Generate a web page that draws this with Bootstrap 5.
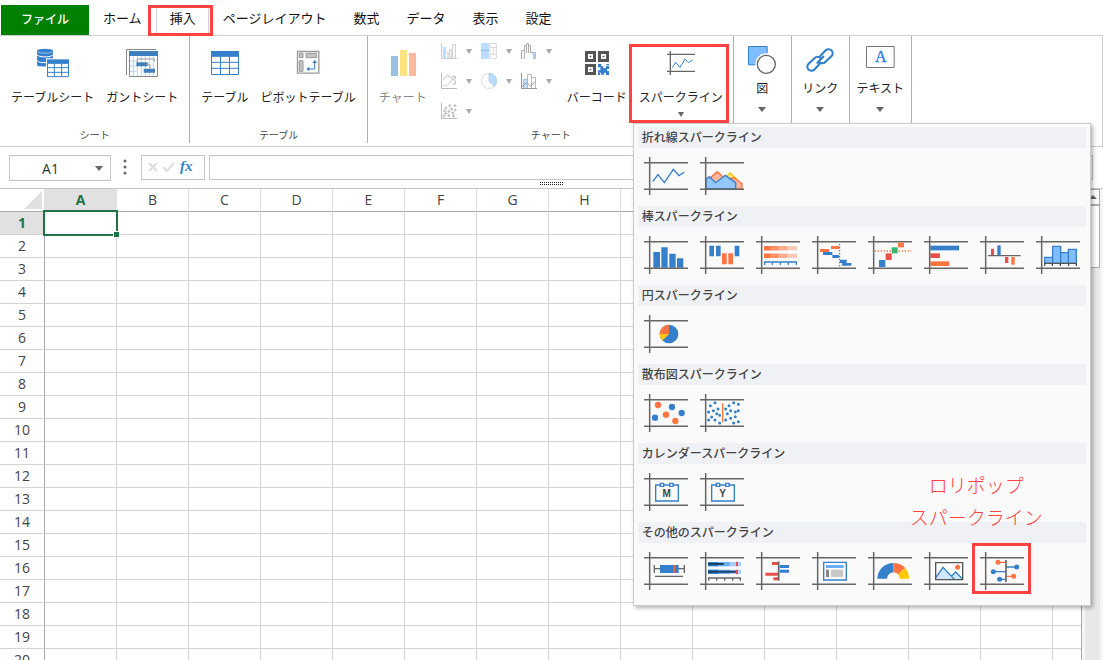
<!DOCTYPE html>
<html lang="ja">
<head>
<meta charset="utf-8">
<meta name="viewport" content="width=device-width, initial-scale=1">
<title>スプレッドシート デザイナー</title>
<link href="https://cdn.jsdelivr.net/npm/bootstrap@5.3.0/dist/css/bootstrap.min.css" rel="stylesheet">
<style>
  :root { --ui: "Noto Sans CJK JP", sans-serif; --line: #d0d0d0; --hot: #ff4343; --blue: #3580cc; }
  body { font-family: var(--ui); font-size: 12px; color: #222; background: #fff; }
  button { font-family: inherit; }
  svg { display: block; }

  /* tab strip */
  .tabstrip { padding: 5px 0 0 1px; gap: 1px; font-size: 13px; }
  .tabstrip button { height: 30px; padding: 0 12px 5px; border: 1px solid transparent; border-bottom: 0; background: none; color: #111; line-height: 24px; white-space: nowrap; }
  .tabstrip .file-tab { width: 88px; padding-bottom: 3px; background: #008000; color: #fff; font-size: 12px; font-weight: 500; }
  .tabstrip .on { border-color: var(--line); position: relative; padding-left: 13px; }
  .marked::after { content: ""; position: absolute; border: 3px solid var(--hot); pointer-events: none; z-index: 1100; }
  .on.marked::after { inset: -1px -5px -1px -9px; }

  /* ribbon */
  .ribbon { height: 112px; border: 1px solid var(--line); border-left: 0; }
  .rgroup { border-right: 1px solid #adb2ba; height: 107px; padding: 0 5px; }
  .rgroup.chartgroup { padding-right: 4px; }
  .rgroup.slim { padding: 0; }
  .rgroup-name { font-size: 10px; line-height: 14px; padding-bottom: 1px; color: #444; }
  .rbtn { border: 0; background: none; padding: 11px 6px 0; color: #222; font-size: 12px; line-height: 20px; white-space: nowrap; }
  .rbtn .cap { display: block; margin-top: 8px; }
  .slim .rbtn { padding-top: 8px; min-width: 57px; }
  .slim .rbtn.wide { min-width: 61px; }
  .slim .rbtn .cap { margin-top: 2px; }
  .rbtn.off { color: #888; }
  .tri { display: block; width: 0; border: 4px solid transparent; border-top: 5px solid #666; border-bottom: 0; }
  .tri.sm { border-width: 5px 3px 0; border-top-color: #666; margin-top: 5px; }
  .slim .tri { margin-top: 9px; border-width: 5px 4px 0; }
  .chartrow { height: 90px; }
  .minis { display: grid; grid-template-columns: repeat(3, 40px); grid-auto-rows: 30px; margin: 0 4px; }
  .minis button { border: 0; background: none; padding: 0 0 0 4px; display: flex; align-items: center; gap: 9px; }
  .minis .tri { border-width: 5px 3px 0; border-top-color: #aaa; }
  .spark.marked::after { inset: 8px 0 3px -4px; }

  /* sparkline gallery */
  .gallery { display: block; top: 87px; left: 0; width: 458px; padding: 3px 4px 4px; border: 1px solid #ccc; border-radius: 0; background: #fafafa; box-shadow: 2px 2px 4px rgba(0,0,0,.3); z-index: 1050; }
  .gallery h6 { margin: 0; padding-left: 4px; font-size: 12px; line-height: 19px; height: 21px; font-weight: 500; color: #444; background: #f0f1f5; }
  .cells { height: 58px; }
  .cells button { width: 56px; height: 56px; border: 0; background: none; padding: 0 6px; position: relative; }
  .cells .marked::after { inset: 0 -1px 5px -2px; }
  .callout { top: 345px; right: 47px; font-size: 19px; line-height: 32px; font-weight: 300; color: var(--hot); pointer-events: none; }

  /* formula bar */
  .fbar { padding: 8px 10px 0 9px; }
  .box { border: 1px solid #c6c6c6; background: #fff; }
  .namebox { width: 102px; height: 26px; }
  .namebox input { width: 81px; border: 0; padding: 0; text-align: center; font: 14px "Open Sans", sans-serif; color: #333; }
  .fxbox { width: 64px; height: 25px; margin-left: 14px; }
  .fxbox button { border: 0; background: none; padding: 0; }
  .fbar .formula { height: 25px; margin-left: 4px; padding: 0 4px; min-width: 0; font-size: 13px; }
  .dots { width: 4px; margin-left: 12px; }
  .grip { height: 8px; border-bottom: 1px solid #c6c6c6; padding-top: 1px; }
  .grip i { width: 24px; height: 4px; background: repeating-linear-gradient(90deg, #222 0 1px, transparent 1px 2px) 0 0/100% 1px repeat-x, repeating-linear-gradient(90deg, #222 0 1px, transparent 1px 2px) 0 2px/100% 1px repeat-x; }

  /* sheet */
  .sheet { border-right: 1px solid #aaa; min-width: 0; }
  .cellgrid { table-layout: fixed; width: 1125px; border-collapse: separate; border-spacing: 0; font: 14px/20px "Open Sans", "Noto Sans", sans-serif; color: #444; }
  .cellgrid th, .cellgrid td { height: 23px; padding: 0; border: 0 solid #d4d4d4; border-width: 0 1px 1px 0; text-align: center; font-weight: 400; }
  .cellgrid thead th { border-bottom-color: #aaa; border-right-color: #dde2dd; }
  .cellgrid tbody th { border-right-color: #aaa; }
  .cellgrid th.cur { background: #e1e1e1; color: #217346; font-weight: 700; }
  .cellgrid td.cur { position: relative; }
  .cellgrid td.cur::before { content: ""; position: absolute; inset: -2px -2px; border: 2px solid #217346; }
  .cellgrid td.cur::after { content: ""; position: absolute; right: -3px; bottom: -3px; width: 6px; height: 6px; background: #217346; border: solid #fff; border-width: 1px 0 0 1px; }
  .corner { display: block; width: 0; margin: 0 2px 0 auto; border: solid transparent; border-width: 0 0 18px 18px; border-bottom-color: #e1e1e1; }
  .sbar { width: 21px; padding-left: 3px; background: #f5f5f5; }
  .track { width: 15px; background: #e8e8e8; }
  .track button { border: 1px solid #aaa; background: #fff; padding: 0; height: 16px; width: 15px; display: block; }
  .track .thumb { height: 63px; margin-top: 0; }
  .up { display: block; width: 0; margin: auto; border: 4px solid transparent; border-top: 0; border-bottom-color: #666; }
</style>
</head>
<body class="d-flex flex-column vh-100 overflow-hidden">

<svg width="0" height="0" class="position-absolute" aria-hidden="true">
  <symbol id="axes" viewBox="0 0 132 114"><path d="M0 17H132M0 97H132M17 0V114" stroke="#666" stroke-width="4.500" fill="none"/></symbol>
</svg>

<nav class="tabstrip d-flex flex-shrink-0" aria-label="リボン">
  <button type="button" class="file-tab">ファイル</button>
  <button type="button">ホーム</button>
  <button type="button" class="on marked">挿入</button>
  <button type="button">ページレイアウト</button>
  <button type="button">数式</button>
  <button type="button">データ</button>
  <button type="button">表示</button>
  <button type="button">設定</button>
</nav>

<div class="ribbon d-flex flex-shrink-0">
  <section class="rgroup d-flex flex-column justify-content-between">
    <div class="d-flex">
      <button type="button" class="rbtn d-flex flex-column align-items-center">
        <svg width="32" height="32" viewBox="0 0 96 96"><path d="M0 12v39c0 4 10 7 24 7V12z" fill="#3580cc"/><path d="M24 12h24v23H28v23H0z" fill="#3580cc"/><path d="M0 23c4 9 44 9 48 0M0 40c4 7 15 7 27 7" stroke="#fff" stroke-width="3" fill="none"/><ellipse cx="24" cy="12" rx="24" ry="7" fill="#3580cc"/><path d="M2 14c6 6 38 6 44 0" stroke="#cfe2f5" stroke-width="2" fill="none"/><path d="M27 34h69v58H27z" fill="#fff"/><path d="M30 37h66v12H30z" fill="#3580cc"/><path d="M31.500 49h63v40h-63zM31 62h64M31 76h64M52 49v40M74 49v40" stroke="#3580cc" stroke-width="3" fill="none"/></svg>
        <span class="cap">テーブルシート</span></button>
      <button type="button" class="rbtn d-flex flex-column align-items-center">
        <svg width="32" height="32" viewBox="0 0 96 96"><path d="M1.500 84V7.500H90" stroke="#888" stroke-width="3" fill="none"/><path d="M10.500 13.500h84v75h-84z" fill="#fff" stroke="#888" stroke-width="3"/><path d="M9 12h87v15H9z" fill="#3f7fbd"/><path d="M22 27v60M34 27v60M46 27v60M58 27v60M70 27v60M82 27v60M12 42h20M12 57h20M12 73h20" stroke="#bcd3ea" stroke-width="3"/><path d="M34 44V36h51v8" stroke="#999" stroke-width="3" fill="none"/><path d="M31 46h34v12H31zM53 65h34v12H53z" fill="#3f7fbd"/><path d="M60 52h12v12" stroke="#999" stroke-width="3" fill="none"/></svg>
        <span class="cap">ガントシート</span></button>
    </div>
    <div class="rgroup-name text-center">シート</div>
  </section>

  <section class="rgroup d-flex flex-column justify-content-between">
    <div class="d-flex">
      <button type="button" class="rbtn d-flex flex-column align-items-center">
        <svg width="32" height="32" viewBox="0 0 96 96"><path d="M6 12h84v16H6z" fill="#3580cc"/><path d="M7.500 28h81v54.500h-81zM7 46h82M7 64h82M34.500 28v54M61.500 28v54" stroke="#3580cc" stroke-width="3" fill="#fff"/></svg>
        <span class="cap">テーブル</span></button>
      <button type="button" class="rbtn d-flex flex-column align-items-center">
        <svg width="32" height="32" viewBox="0 0 96 96"><path d="M16.500 13.500h64v65h-64z" stroke="#999" stroke-width="4" fill="#fff"/><path d="M22 19h11v13H22zM42 19h32v13H42zM22 41h11v32H22z" fill="#c4c4c4" stroke="#999" stroke-width="3"/><path d="M68 43v23H48" stroke="#3f7fbd" stroke-width="3" fill="none"/><path d="M68 38l7 10H61zM43 66l9-7v14z" fill="#3f7fbd"/></svg>
        <span class="cap">ピボットテーブル</span></button>
    </div>
    <div class="rgroup-name text-center">テーブル</div>
  </section>

  <section class="rgroup chartgroup d-flex flex-column justify-content-between">
    <div class="chartrow d-flex">
      <button type="button" class="rbtn off d-flex flex-column align-items-center">
        <svg width="32" height="32" viewBox="0 0 96 96"><path d="M12 27h21v60H12z" fill="#9bbfe3"/><path d="M39 9h21v78H39z" fill="#ffe380"/><path d="M66 18h21v69H66z" fill="#fdb9a0"/></svg>
        <span class="cap">チャート</span></button>
      <div class="minis">
        <button type="button" aria-label="縦棒"><svg width="16" height="16" viewBox="0 0 48 48" fill="none" stroke="#ccc" stroke-width="3"><path d="M1.500 0V46.500H48"/><path d="M7 13h6v33H7z" fill="#b8dbff" stroke="#b8dbff"/><path d="M16 28h5v18M25 20h6v26h-6zM35 4h8v42h-8z"/></svg><i class="tri"></i></button>
        <button type="button" aria-label="ツリーマップ"><svg width="16" height="16" viewBox="0 0 48 48"><path d="M0 0h24v48H0z" fill="#bcddff"/><path d="M0 22h24" stroke="#8bb8e4" stroke-width="3"/><path d="M27 1.500h19v45H27zM27 13h19M27 34h19M37 13v21" stroke="#d8d8d8" stroke-width="3" fill="none"/></svg><i class="tri"></i></button>
        <button type="button" aria-label="ウォーターフォール"><svg width="16" height="16" viewBox="0 0 48 48" fill="none" stroke="#aaa" stroke-width="3"><path d="M1.500 48V22.500H10V48M10.500 22V7.500h6V30M16.500 8V1.500h6V30M22.500 7.500h6V30M28.500 28.500H37"/><path d="M37.500 28.500h6v18h-6z" fill="#bcddff" stroke="#9bbfe3"/></svg><i class="tri"></i></button>
        <button type="button" aria-label="折れ線"><svg width="16" height="16" viewBox="0 0 48 48" fill="none" stroke="#bbb" stroke-width="3"><path d="M1.500 0V46.500H48"/><path d="M6 20L20 7l24 18"/><path d="M6 38h12L42 10" stroke="#ccc"/><path d="M34 10h9v9M35 33h8v-9"/></svg><i class="tri"></i></button>
        <button type="button" aria-label="円"><svg width="16" height="16" viewBox="0 0 48 48"><circle cx="24" cy="24" r="22.500" fill="#fff" stroke="#ccc" stroke-width="2"/><path d="M24 24V1a23 23 0 0 1 16 39z" fill="#bcddff" stroke="#9bc5ef" stroke-width="2"/></svg><i class="tri"></i></button>
        <button type="button" aria-label="複合"><svg width="16" height="16" viewBox="0 0 48 48" fill="none" stroke="#999" stroke-width="3"><path d="M7.500 19.500h12v27h-12z" fill="#bcddff" stroke="#9bc5ef"/><path d="M19.500 4.500h12v42h-12zM31.500 13.500h12v33h-12z" stroke="#bbb"/><path d="M1.500 0V46.500H48M3 42l14-14 12 12 14-15"/></svg><i class="tri"></i></button>
        <button type="button" aria-label="散布図"><svg width="16" height="16" viewBox="0 0 48 48" fill="none" stroke="#bbb" stroke-width="3"><path d="M1.500 0V46.500H48"/><path stroke-width="3" stroke="#b4b4b4" d="M22 8h9M26.500 3.500v9M37 8h9M41.500 3.500v9M10 15h9M14.500 10.500v9M27 18h9M31.500 13.500v9M38 21h9M42.500 16.500v9M7 24h9M11.500 19.500v9M19 26h9M23.500 21.500v9M31 30h9M35.500 25.500v9M10 32h9M14.500 27.500v9M4 39h9M8.500 34.500v9M19 38h9M23.500 33.500v9M33 39h9M37.500 34.500v9"/></svg><i class="tri"></i></button>
      </div>
      <button type="button" class="rbtn d-flex flex-column align-items-center">
        <svg width="32" height="32" viewBox="0 0 96 96"><path fill="#555" fill-rule="evenodd" d="M12 12h33v33H12zM51 12h33v33H51zM12 51h33v33H12zM21 21v15h15V21zM60 21v15h15V21zM21 60v15h15V60z"/><path d="M26 26h5v5h-5zM65 26h5v5h-5zM26 65h5v5h-5z" fill="#555"/><path d="M51 51h10v7h6v6h8v-7h9v9h-6v6h6v12h-9v-7h-6v6h-9v-6h-9v-7h7v-9h-7zM76 51h8v4h-8zM51 78h6v6h-6z" fill="#3580cc"/></svg>
        <span class="cap">バーコード</span></button>
      <div class="spark marked position-relative dropdown">
        <button type="button" class="rbtn d-flex flex-column align-items-center" aria-expanded="true">
          <svg width="32" height="32" viewBox="0 0 96 96" fill="none"><path d="M6 22h84M6 73h84M16 12v72" stroke="#666" stroke-width="4"/><path d="M22 62L32 46 45 61 60 36 70 47 83 39" stroke="#3580cc" stroke-width="3"/></svg>
          <span class="cap">スパークライン</span><i class="tri sm"></i></button>

        <div class="gallery dropdown-menu show">
          <h6>折れ線スパークライン</h6>
          <div class="cells d-flex">
            <button type="button" aria-label="折れ線"><svg width="44" height="38" viewBox="0 0 132 114"><use href="#axes"/><path d="M26 74L42 53 61 77 88 37 105 56 121 45" fill="none" stroke="#3580cc" stroke-width="4"/></svg></button>
            <button type="button" aria-label="面"><svg width="44" height="38" viewBox="0 0 132 114"><path d="M76 95V62L90 48l20 18v29z" fill="#ffe680" stroke="#ffc800" stroke-width="4"/><path d="M18 95V74L52 44 76 66l27-3 23 17v15z" fill="#ffb59c" stroke="#ff7440" stroke-width="4"/><path d="M18 95V66l10-7 19 18 29-22 31 22v18z" fill="#94c7ff" stroke="#3580cc" stroke-width="4"/><use href="#axes"/></svg></button>
          </div>
          <h6>棒スパークライン</h6>
          <div class="cells d-flex">
            <button type="button" aria-label="縦棒"><svg width="44" height="38" viewBox="0 0 132 114"><path d="M28 48h20v47H28zM52 34h19v61H52zM76 53h19v42H76zM99 67h19v28H99z" fill="#3580cc"/><use href="#axes"/></svg></button>
            <button type="button" aria-label="勝敗"><svg width="44" height="38" viewBox="0 0 132 114"><use href="#axes"/><path d="M28 29h14v32H28zM48 29h14v32H48zM104 29h14v32h-14z" fill="#3580cc"/><path d="M66 52h14v33H66zM85 52h14v33H85z" fill="#ff7440"/></svg></button>
            <button type="button" aria-label="積み上げ"><svg width="44" height="38" viewBox="0 0 132 114"><use href="#axes"/><path d="M24 30h99v13H24zM24 53h99v13H24z" fill="#ffcbb8"/><path d="M24 30h70v13H24zM24 53h70v13H24z" fill="#ffac8c"/><path d="M24 30h43v13H24zM24 53h43v13H24z" fill="#ff8f66"/><path d="M24 30h19v13H24zM24 53h19v13H24z" fill="#ff7440"/><path d="M24 78h99M26 78v9M49 78v9M73 78v9M97 78v9M121 78v9" stroke="#3580cc" stroke-width="4"/></svg></button>
            <button type="button" aria-label="カスケード"><svg width="44" height="38" viewBox="0 0 132 114"><use href="#axes"/><path d="M57 30h24v9H57zM24 39h27v9H24z" fill="#ff7440"/><path d="M33 48h28v9H33zM61 57h20v9H61zM84 71h20v10H84zM90 81h28v8H90z" fill="#3580cc"/><path d="M83 24v70" stroke="#555" stroke-width="3" stroke-dasharray="4 5"/></svg></button>
            <button type="button" aria-label="パレート"><svg width="44" height="38" viewBox="0 0 132 114"><use href="#axes"/><path d="M20 45h110" stroke="#ff7440" stroke-width="5" stroke-dasharray="4 5"/><path d="M33 72h19v21H33z" fill="#3580cc"/><path d="M53 52h18v20H53z" fill="#e8504a"/><path d="M71 34h18v18H71z" fill="#3cb86c"/><path d="M90 20h18v14H90z" fill="#ff7440"/></svg></button>
            <button type="button" aria-label="横棒"><svg width="44" height="38" viewBox="0 0 132 114"><path d="M19 29h86v14H19z" fill="#3580cc"/><path d="M19 52h29v14H19z" fill="#e8504a"/><path d="M19 76h57v14H19z" fill="#ff7440"/><use href="#axes"/></svg></button>
            <button type="button" aria-label="バリ"><svg width="44" height="38" viewBox="0 0 132 114"><use href="#axes"/><path d="M33 38h9v20h-9zM75 63h10v18H75z" fill="#e8504a"/><path d="M52 28h10v30H52z" fill="#3580cc"/><path d="M94 63h10v23H94z" fill="#ff7440"/><path d="M24 59h98" stroke="#666" stroke-width="4"/></svg></button>
            <button type="button" aria-label="ヒストグラム"><svg width="44" height="38" viewBox="0 0 132 114"><use href="#axes"/><path d="M26 82V64h24v18zM50 82V31h24v51zM74 82V50h23v32zM97 82V40h24v42z" fill="#80bdff" stroke="#3580cc" stroke-width="4"/><path d="M24 82h99M26 82v8M49 82v8M73 82v8M98 82v8M121 82v8" stroke="#555" stroke-width="4"/></svg></button>
          </div>
          <h6>円スパークライン</h6>
          <div class="cells d-flex">
            <button type="button" aria-label="円"><svg width="44" height="38" viewBox="0 0 132 114"><use href="#axes"/><circle cx="75" cy="57" r="28" fill="#3580cc"/><path d="M75 57H47a28 28 0 0 1 28-28z" fill="#ff7440"/><path d="M75 57H47a28 28 0 0 0 8 20z" fill="#ffc800"/></svg></button>
          </div>
          <h6>散布図スパークライン</h6>
          <div class="cells d-flex">
            <button type="button" aria-label="散布図"><svg width="44" height="38" viewBox="0 0 132 114"><use href="#axes"/><g fill="#ff7440"><circle cx="42" cy="33" r="9.500"/><circle cx="66" cy="62" r="9.500"/><circle cx="94" cy="81" r="9.500"/></g><g fill="#3580cc"><circle cx="84" cy="39" r="9.500"/><circle cx="113" cy="57" r="9.500"/><circle cx="33" cy="71" r="9.500"/></g></svg></button>
            <button type="button" aria-label="散布"><svg width="44" height="38" viewBox="0 0 132 114"><use href="#axes"/><path d="M45 26h0M31 35h0M54 45h0M40 50h0M26 54h0M50 59h0M59 64h0M35 69h0M26 78h0M45 78h0M59 87h0M101 26h0M115 31h0M87 35h0M77 45h0M92 50h0M115 50h0M106 54h0M82 59h0M106 68h0M92 73h0M77 78h0M115 83h0M101 87h0" stroke="#3580cc" stroke-width="9" stroke-linecap="round"/><path d="M68 28v57" stroke="#ff7440" stroke-width="4"/></svg></button>
          </div>
          <h6>カレンダースパークライン</h6>
          <div class="cells d-flex">
            <button type="button" aria-label="月"><svg width="44" height="38" viewBox="0 0 132 114"><use href="#axes"/><g fill="#fafafa" stroke="#3580cc" stroke-width="4"><path d="M35 36h68v48H35z"/><path d="M49 31h10v9H49zM77 31h10v9H77z"/></g><text x="68" y="72" text-anchor="middle" font-family="Liberation Sans" font-size="30" font-weight="700" fill="#444">M</text></svg></button>
            <button type="button" aria-label="年"><svg width="44" height="38" viewBox="0 0 132 114"><use href="#axes"/><g fill="#fafafa" stroke="#3580cc" stroke-width="4"><path d="M35 36h68v48H35z"/><path d="M49 31h10v9H49zM77 31h10v9H77z"/></g><text x="68" y="72" text-anchor="middle" font-family="Liberation Sans" font-size="30" font-weight="700" fill="#444">Y</text></svg></button>
          </div>
          <h6>その他のスパークライン</h6>
          <div class="cells d-flex">
            <button type="button" aria-label="箱ひげ図"><svg width="44" height="38" viewBox="0 0 132 114"><use href="#axes"/><path d="M31 50h90M31 39v24M121 39v24M33 73h84" stroke="#666" stroke-width="4"/><path d="M48 39h56v24H48z" fill="#3580cc"/><path d="M91 39v24" stroke="#ff7440" stroke-width="4"/></svg></button>
            <button type="button" aria-label="ブレット"><svg width="44" height="38" viewBox="0 0 132 114"><use href="#axes"/><path d="M24 30h99v13H24zM24 53h99v13H24z" fill="#a4d0ff"/><path d="M24 30h65v13H24zM24 53h65v13H24z" fill="#68b0fa"/><path d="M24 30h30v13H24zM24 53h30v13H24z" fill="#3580cc"/><path d="M24 36h47M24 59h85" stroke="#1f3f60" stroke-width="6"/><path d="M111 29v14M111 53v14" stroke="#e8504a" stroke-width="6"/><path d="M24 78h99M26 78v8M50 78v8M74 78v8M98 78v8M121 78v8" stroke="#666" stroke-width="4"/></svg></button>
            <button type="button" aria-label="トルネード"><svg width="44" height="38" viewBox="0 0 132 114"><use href="#axes"/><path d="M48 30h19v9H48zM28 62h39v9H28zM52 76h15v9H52z" fill="#e8504a"/><path d="M71 39h28v9H71zM71 53h28v9H71z" fill="#3580cc"/><path d="M68 28v58" stroke="#666" stroke-width="5"/></svg></button>
            <button type="button" aria-label="テンプレート"><svg width="44" height="38" viewBox="0 0 132 114"><use href="#axes"/><path d="M35 31h68v53H35z" fill="#fafafa" stroke="#3580cc" stroke-width="4"/><path d="M42 39h53v9H42z" fill="#68b0fa"/><path d="M42 53h9v22h-9z" fill="#888"/><path d="M57 53h36v22H57z" fill="#c8c8c8"/></svg></button>
            <button type="button" aria-label="ゲージ"><svg width="44" height="38" viewBox="0 0 132 114"><use href="#axes"/><path d="M28 80a48 48 0 0 1 48-47v28a19 19 0 0 0-19 19z" fill="#3580cc"/><path d="M76 33a48 48 0 0 1 36 15L90 67a19 19 0 0 0-14-6z" fill="#ff7440"/><path d="M112 48a48 48 0 0 1 11 32H95a19 19 0 0 0-5-13z" fill="#ffc800"/></svg></button>
            <button type="button" aria-label="画像"><svg width="44" height="38" viewBox="0 0 132 114"><use href="#axes"/><path d="M35 32h81v51H35z" fill="#fff"/><path d="M36 76L57 46 84 72 95 60l20 20v2H36z" fill="#d0e8ff"/><path d="M36 76L57 46 91 82M82 73L95 60l20 20" fill="none" stroke="#3580cc" stroke-width="4"/><circle cx="101" cy="46" r="7.500" fill="#ff7440"/><path d="M35 32h81v51H35z" fill="none" stroke="#555" stroke-width="4"/></svg></button>
            <button type="button" class="marked" aria-label="ロリポップ"><svg width="44" height="38" viewBox="0 0 132 114"><use href="#axes"/><path d="M54 31h24M78 73h23" stroke="#ff7440" stroke-width="4"/><path d="M78 45h32M40 59h38M59 82h19" stroke="#3580cc" stroke-width="4"/><g fill="#ff7440"><circle cx="54" cy="31" r="7.500"/><circle cx="101" cy="73" r="7.500"/></g><g fill="#3580cc"><circle cx="110" cy="45" r="7.500"/><circle cx="40" cy="59" r="7.500"/><circle cx="59" cy="82" r="7.500"/></g><path d="M78 24v66" stroke="#666" stroke-width="5"/></svg></button>
          </div>
          <div class="callout position-absolute text-center">ロリポップ<br>スパークライン</div>
        </div>
      </div>
    </div>
    <div class="rgroup-name text-center">チャート</div>
  </section>

  <section class="rgroup slim">
    <button type="button" class="rbtn d-flex flex-column align-items-center">
      <svg width="32" height="32" viewBox="0 0 96 96"><path d="M7.500 7.500h56v55h-56z" fill="#80bdff" stroke="#3580cc" stroke-width="3"/><circle cx="61" cy="61" r="33" fill="#fff"/><circle cx="61" cy="61" r="27" fill="#fff" stroke="#666" stroke-width="4"/></svg>
      <span class="cap">図</span><i class="tri"></i></button>
  </section>
  <section class="rgroup slim">
    <button type="button" class="rbtn d-flex flex-column align-items-center">
      <svg width="32" height="32" viewBox="0 0 96 96" fill="none" stroke="#3580cc" stroke-width="6.500" stroke-linecap="round"><path d="M49 36L65 19a12.500 12.500 0 0 1 18 1 12.500 12.500 0 0 1-1 17L64 54a12.500 12.500 0 0 1-18 0M47 59L31 77a12.500 12.500 0 0 1-18-1 12.500 12.500 0 0 1 1-17L32 42a12.500 12.500 0 0 1 18 0M40 56L58 38"/></svg>
      <span class="cap">リンク</span><i class="tri"></i></button>
  </section>
  <section class="rgroup slim">
    <button type="button" class="rbtn wide d-flex flex-column align-items-center">
      <svg width="32" height="32" viewBox="0 0 96 96"><path d="M7.500 7.500h83v63h-83z" fill="#fff" stroke="#777" stroke-width="3"/><text x="50" y="55" text-anchor="middle" font-family="Liberation Serif" font-size="48" fill="#2b7de9" stroke="#2b7de9">A</text></svg>
      <span class="cap">テキスト</span><i class="tri"></i></button>
  </section>
</div>

<div class="fbar d-flex flex-shrink-0">
  <div class="box namebox d-flex align-items-center"><input type="text" value="A1" aria-label="名前ボックス"><i class="tri ms-1"></i></div>
  <svg class="dots" height="24" viewBox="0 0 4 24" fill="#666"><circle cx="2" cy="6" r="1.500"/><circle cx="2" cy="12" r="1.500"/><circle cx="2" cy="18" r="1.500"/></svg>
  <div class="box fxbox d-flex align-items-start ps-1">
    <button type="button" class="pt-1" aria-label="キャンセル"><svg width="15" height="14" viewBox="0 0 15 14"><path d="M3 3l8 8M11 3l-8 8" stroke="#ddd" stroke-width="2"/></svg></button>
    <button type="button" class="pt-1" aria-label="入力"><svg width="15" height="14" viewBox="0 0 15 14"><path d="M2 7l4 4 7-8" stroke="#ddd" stroke-width="2" fill="none"/></svg></button>
    <button type="button" aria-label="関数の挿入"><svg width="24" height="22" viewBox="0 0 24 22"><text x="4" y="15" font-family="Liberation Serif" font-style="italic" font-weight="700" font-size="15" fill="#3580cc">fx</text></svg></button>
  </div>
  <input type="text" class="box formula flex-grow-1" aria-label="数式バー">
</div>
<div class="grip d-flex justify-content-center flex-shrink-0"><i></i></div>

<main class="d-flex flex-grow-1 overflow-hidden">
  <div class="sheet flex-grow-1 overflow-hidden">
    <table class="cellgrid">
      <thead><tr id="cols"><th style="width:45px"><span class="corner"></span></th></tr></thead>
      <tbody id="rows"></tbody>
    </table>
  </div>
  <div class="sbar flex-shrink-0 d-flex">
    <div class="track">
      <button type="button" aria-label="上へ"><i class="up"></i></button>
      <button type="button" class="thumb" aria-label="スクロール"></button>
    </div>
  </div>
</main>

<script>
  // Column letters, then numbered rows of empty cells; A1 is the active cell.
  const letters = "ABCDEFGHIJKLMNO".split("");
  document.getElementById("cols").insertAdjacentHTML("beforeend",
    letters.map((c, i) => `<th scope="col"${i ? "" : ' class="cur"'}>${c}</th>`).join(""));
  document.getElementById("rows").innerHTML = Array.from({ length: 20 }, (_, r) =>
    `<tr><th scope="row"${r ? "" : ' class="cur"'}>${r + 1}</th>` +
    letters.map((c, i) => `<td${r || i ? "" : ' class="cur"'}></td>`).join("") + "</tr>").join("");
</script>
<script src="https://cdn.jsdelivr.net/npm/bootstrap@5.3.0/dist/js/bootstrap.bundle.min.js"></script>
</body>
</html>
